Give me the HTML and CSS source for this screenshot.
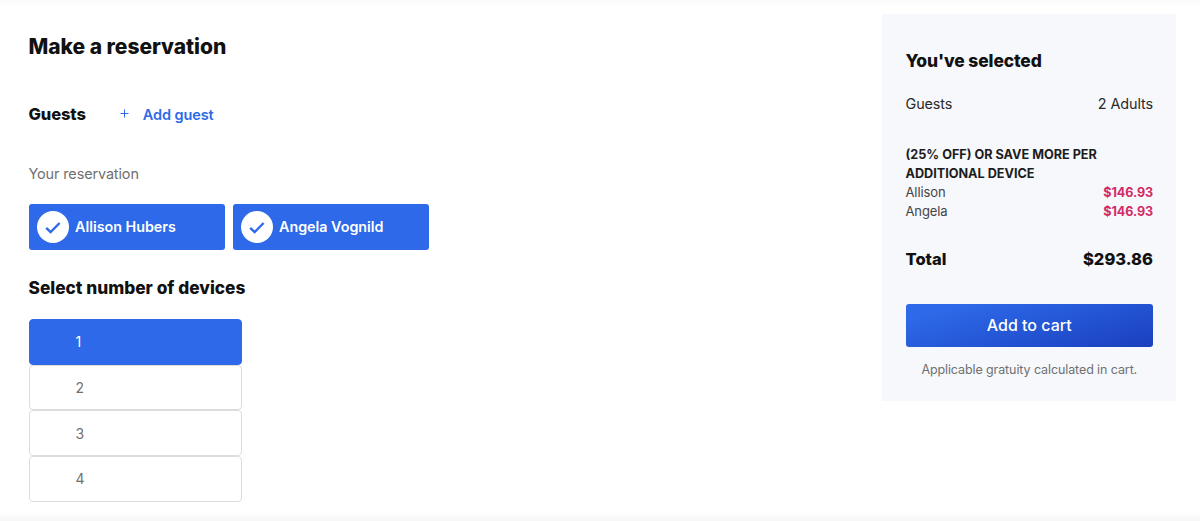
FILE: index.html
```html
<!DOCTYPE html>
<html lang="en">
<head>
<meta charset="utf-8">
<title>Make a reservation</title>
<link rel="stylesheet" href="styles.css">
</head>
<body>
<div class="page">
  <main class="main">
    <h1 class="title">Make a reservation</h1>
    <div class="guests">
      <h2 class="label">Guests</h2>
      <a class="add" href="#">
        <svg class="plus" width="9" height="9" viewBox="0 0 9 9"><path d="M4.5 0.5v8M0.5 4.5h8" stroke="#2d69e8" stroke-width="1" fill="none"/></svg>
        <span>Add guest</span>
      </a>
    </div>
    <p class="muted">Your reservation</p>
    <div class="chips">
      <div class="chip">
        <span class="tick"><svg width="16" height="13" viewBox="0 0 16 13"><path d="M1.2 6.8l4.4 4.2L14.6 2" stroke="#2d69e8" stroke-width="2.4" fill="none"/></svg></span>
        <span class="chip-name">Allison Hubers</span>
      </div>
      <div class="chip">
        <span class="tick"><svg width="16" height="13" viewBox="0 0 16 13"><path d="M1.2 6.8l4.4 4.2L14.6 2" stroke="#2d69e8" stroke-width="2.4" fill="none"/></svg></span>
        <span class="chip-name">Angela Vognild</span>
      </div>
    </div>
    <h2 class="label devices-title">Select number of devices</h2>
    <div class="options">
      <div class="option selected">1</div>
      <div class="option">2</div>
      <div class="option">3</div>
      <div class="option">4</div>
    </div>
  </main>
  <aside class="summary">
    <h2 class="summary-title">You've selected</h2>
    <div class="row guests-row"><span>Guests</span><span>2 Adults</span></div>
    <p class="promo">(25% OFF) OR SAVE MORE PER ADDITIONAL DEVICE</p>
    <div class="row line"><span>Allison</span><span class="price">$146.93</span></div>
    <div class="row line"><span>Angela</span><span class="price">$146.93</span></div>
    <div class="row total"><span>Total</span><span>$293.86</span></div>
    <button class="cart" type="button">Add to cart</button>
    <p class="note">Applicable gratuity calculated in cart.</p>
  </aside>
</div>
</body>
</html>
```
FILE: styles.css
```css
* { box-sizing: border-box; }
html, body { margin: 0; height: 100%; }
body {
  font-family: "Inter", "Liberation Sans", sans-serif;
  color: #111;
  background: #fff;
  overflow: hidden;
}
.page {
  height: 521px;
  display: flex;
  justify-content: space-between;
  padding: 14px 24px 0 29px;
  background: linear-gradient(#fafafb 0, #fff 7px, #fff 512px, #f6f6f7 521px);
}
.main { width: 420px; margin-left: -0.5px; }
.title { margin: 21px 0 0; font-size: 21px; line-height: 24px; font-weight: 800; letter-spacing: -0.03px; }
.guests { display: flex; align-items: center; margin-top: 45px; height: 20px; }
.label { margin: 0; font-size: 16.5px; line-height: 20px; font-weight: 800; letter-spacing: -0.1px; }
.add { display: flex; align-items: center; margin-left: 34px; color: #2d69e8; font-size: 14.5px; font-weight: 600; text-decoration: none; letter-spacing: -0.1px; }
.plus { margin-right: 14px; margin-top: -2px; }
.muted { margin: 40px 0 0; font-size: 14.4px; line-height: 20px; color: #707070; letter-spacing: -0.1px; }
.chips { display: flex; gap: 8px; margin-top: 20px; }
.chip { width: 196px; height: 46px; display: flex; align-items: center; gap: 7px; padding-left: 8px; border-radius: 3px; background: #2d69e8; color: #fff; font-size: 14.3px; font-weight: 600; letter-spacing: 0; }
.chip-name { margin: -2px 0 0 -0.5px; }
.tick { width: 32px; height: 32px; border-radius: 50%; background: #fff; display: flex; align-items: center; justify-content: center; }
.devices-title { margin-top: 28px; font-size: 17.3px; letter-spacing: 0; }
.options { width: 213px; margin-top: 21px; }
.option { height: 45.67px; display: flex; align-items: center; padding-left: 46px; border: 1px solid #dcdcdc; border-radius: 4px; font-size: 14px; color: #707070; }
.selected { background: #2d69e8; border-color: #2d69e8; color: #fff; }
.summary { width: 294px; height: 387px; padding: 37px 23px 0 23.5px; background: #f6f8fc; }
.summary-title { margin: 0; font-size: 17.4px; line-height: 20px; font-weight: 800; letter-spacing: -0.1px; }
.row { display: flex; justify-content: space-between; }
.guests-row { margin-top: 23px; font-size: 14.4px; line-height: 20px; color: #2a2a2a; letter-spacing: -0.1px; }
.promo { margin: 32px 0 0; font-size: 12.65px; line-height: 18.5px; font-weight: 700; color: #1c1c1c; letter-spacing: 0; }
.line { font-size: 13px; line-height: 19px; color: #444; letter-spacing: -0.1px; }
.price { color: #d22a66; font-weight: 700; font-size: 12.6px; }
.total { margin-top: 28px; font-size: 16.5px; line-height: 20px; font-weight: 800; letter-spacing: 0; }
.cart { display: block; width: 100%; height: 43px; margin-top: 35px; padding: 0 0 2px; border: 0; border-radius: 3px; background: linear-gradient(165deg, #2d69e8 15%, #1a3fbe 100%); color: #fff; font: 500 16px "Inter", "Liberation Sans", sans-serif; }
.note { margin: 14px 0 0; text-align: center; font-size: 12.5px; line-height: 18px; color: #707070; letter-spacing: -0.1px; }
```
